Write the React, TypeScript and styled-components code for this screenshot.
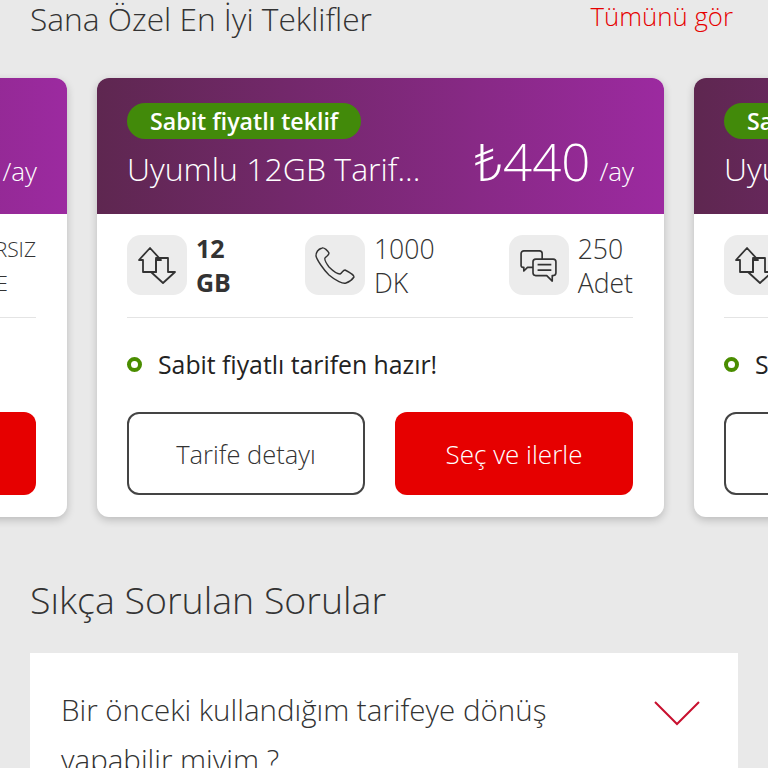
import React from "react";
import styled, { createGlobalStyle } from "styled-components";

const FONT = `"Open Sans", "Noto Sans", "Liberation Sans", sans-serif`;

const Global = createGlobalStyle`
  html, body { margin: 0; padding: 0; background: #e9e9e9; }
  body { font-family: ${FONT}; overflow: hidden; }
`;

const Page = styled.div`
  width: 768px;
  height: 768px;
  overflow: hidden;
  background: #e9e9e9;
  color: #333;
`;

const TopRow = styled.div`
  display: flex;
  justify-content: space-between;
  align-items: flex-start;
  height: 78px;
  padding: 0 35px 0 30px;
`;

const SectionTitle = styled.h2`
  margin: 0;
  font-size: 31.7px;
  line-height: 38px;
  font-weight: 300;
  color: #333;
`;

const SeeAll = styled.a`
  font-size: 25.8px;
  line-height: 32px;
  font-weight: 300;
  color: #e60000;
`;

const Carousel = styled.div`
  display: flex;
  gap: 30px;
  margin-left: -500px;
  width: 1900px;
`;

const Card = styled.article`
  flex: 0 0 567px;
  height: 439px;
  border-radius: 12px;
  overflow: hidden;
  background: #fff;
  box-shadow: 0 3px 8px rgba(0, 0, 0, 0.2);
`;

const CardHead = styled.header`
  height: 136px;
  box-sizing: border-box;
  padding: 25px 30px 0;
  background: linear-gradient(90deg, #5e2750, #9c2aa0);
  color: #fff;
`;

const Pill = styled.span`
  display: inline-block;
  height: 36px;
  padding: 0 23px;
  border-radius: 18px;
  background: #428a0a;
  font-size: 23.2px;
  line-height: 36px;
  font-weight: 600;
  color: #fff;
`;

const HeadRow = styled.div`
  display: flex;
  justify-content: space-between;
  align-items: baseline;
  margin-top: -9px;
`;

const PlanName = styled.span`
  font-size: 32px;
  font-weight: 300;
`;

const Price = styled.span`
  font-size: 51px;
  font-weight: 300;
  line-height: 62px;
`;

const Per = styled.span`
  margin-left: 9px;
  font-size: 26px;
  font-weight: 300;
`;

const CardBody = styled.div`
  padding: 21px 31px 0 30px;
`;

const Stats = styled.div`
  display: flex;
  justify-content: space-between;
  padding-bottom: 22px;
  border-bottom: 1px solid #e4e4e4;
`;

const Stat = styled.div`
  display: flex;
  gap: 9px;
  height: 60px;
`;

const IconTile = styled.div`
  width: 60px;
  height: 60px;
  border-radius: 14px;
  background: #ececec;
  display: flex;
  align-items: center;
  justify-content: center;
`;

const StatText = styled.div<{ $bold?: boolean; $small?: boolean }>`
  font-size: ${(p) => (p.$small ? 21 : p.$bold ? 25 : 26.6)}px;
  line-height: 34px;
  margin-top: ${(p) => (p.$bold ? -4 : -3)}px;
  font-weight: ${(p) => (p.$bold ? 700 : 300)};
  color: #333;
  white-space: nowrap;
`;

const Note = styled.div`
  display: flex;
  align-items: center;
  gap: 16px;
  height: 92px;
  padding-bottom: 2px;
  font-size: 24.8px;
  font-weight: 400;
  color: #222;
`;

const Dot = styled.span`
  width: 15px;
  height: 15px;
  box-sizing: border-box;
  border: 4px solid #4a8d00;
  border-radius: 50%;
`;

const Buttons = styled.div`
  display: grid;
  grid-template-columns: 1fr 1fr;
  gap: 30px;
`;

const Button = styled.button<{ $primary?: boolean }>`
  height: 83px;
  box-sizing: border-box;
  border-radius: 12px;
  border: ${(p) => (p.$primary ? "none" : "2px solid #444")};
  background: ${(p) => (p.$primary ? "#e60000" : "#fff")};
  color: ${(p) => (p.$primary ? "#fff" : "#333")};
  font-family: ${FONT};
  font-size: ${(p) => (p.$primary ? 26 : 25.5)}px;
  font-weight: 300;
`;

const FaqTitle = styled.h2`
  margin: 58px 0 28px 30px;
  font-size: 37.5px;
  line-height: 50px;
  font-weight: 300;
  color: #333;
`;

const FaqCard = styled.section`
  margin: 0 30px;
  background: #fff;
  padding: 32px 38px 0 31px;
  display: flex;
  justify-content: space-between;
  height: 200px;
`;

const FaqText = styled.div`
  width: 530px;
  font-size: 29.5px;
  line-height: 50px;
  font-weight: 300;
  color: #333;
`;

const Chevron = styled.svg`
  margin-top: 16px;
  flex: none;
`;

const DataIcon = () => (
  <svg width="38" height="37" viewBox="0 0 38 37" fill="none" stroke="#333" strokeWidth="1.8" strokeLinejoin="round">
    <path d="M1 13 L12 1 L23 13 H18 V25 H5 V13 Z" />
    <path d="M18 11 H30 V25 H37 L25 36 L13 25 H18 Z" />
  </svg>
);

const PhoneIcon = () => (
  <svg width="40" height="37" viewBox="0 0 40 37" fill="none" stroke="#333" strokeWidth="1.4" strokeLinejoin="round">
    <path d="M7 1 C4 2 1 5 1 9 C2 13 8 22 14 28 C21 34 28 37 31 36 C34 35 37 33 39 30 C39 28 32 24 30 23 C28 23 27 26 25 27 C22 27 18 24 14 20 C11 16 9 13 10 11 C12 9 14 8 14 6 C13 4 9 0 7 1 Z" />
  </svg>
);

const ChatIcon = () => (
  <svg width="37" height="33" viewBox="0 0 40 36" fill="none" stroke="#333" strokeWidth="1.8" strokeLinejoin="round">
    <path d="M14 20 H8 L4 24 V20 H3 A2 2 0 0 1 1 18 V5 A3 3 0 0 1 4 2 H21 A3 3 0 0 1 24 5 V11" />
    <path d="M17 11 H36 A3 3 0 0 1 39 14 V26 A3 3 0 0 1 36 29 H35 V35 L29 29 H17 A3 3 0 0 1 14 26 V14 A3 3 0 0 1 17 11 Z" />
    <path d="M19 17 H34 M19 23 H34" />
  </svg>
);

type OfferProps = {
  third: React.ReactNode;
  thirdSmall?: boolean;
};

const Offer = ({ third, thirdSmall }: OfferProps) => (
  <Card>
    <CardHead>
      <Pill>Sabit fiyatlı teklif</Pill>
      <HeadRow>
        <PlanName>Uyumlu 12GB Tarif...</PlanName>
        <span>
          <Price>₺440</Price>
          <Per>/ay</Per>
        </span>
      </HeadRow>
    </CardHead>
    <CardBody>
      <Stats>
        <Stat>
          <IconTile><DataIcon /></IconTile>
          <StatText $bold>12<br />GB</StatText>
        </Stat>
        <Stat>
          <IconTile><PhoneIcon /></IconTile>
          <StatText>1000<br />DK</StatText>
        </Stat>
        <Stat>
          <IconTile><ChatIcon /></IconTile>
          <StatText $small={thirdSmall}>{third}</StatText>
        </Stat>
      </Stats>
      <Note><Dot />Sabit fiyatlı tarifen hazır!</Note>
      <Buttons>
        <Button>Tarife detayı</Button>
        <Button $primary>Seç ve ilerle</Button>
      </Buttons>
    </CardBody>
  </Card>
);

export default function App() {
  return (
    <Page>
      <Global />
      <TopRow>
        <SectionTitle>Sana Özel En İyi Teklifler</SectionTitle>
        <SeeAll>Tümünü gör</SeeAll>
      </TopRow>
      <Carousel>
        <Offer thirdSmall third={<>SINIRSIZ<br />TANE</>} />
        <Offer third={<>250<br />Adet</>} />
        <Offer third={<>250<br />Adet</>} />
      </Carousel>
      <FaqTitle>Sıkça Sorulan Sorular</FaqTitle>
      <FaqCard>
        <FaqText>Bir önceki kullandığım tarifeye dönüş yapabilir miyim ?</FaqText>
        <Chevron width="46" height="26" viewBox="0 0 46 26" fill="none" stroke="#c8102e" strokeWidth="2">
          <path d="M1 1 L23 23 L45 1" />
        </Chevron>
      </FaqCard>
    </Page>
  );
}
